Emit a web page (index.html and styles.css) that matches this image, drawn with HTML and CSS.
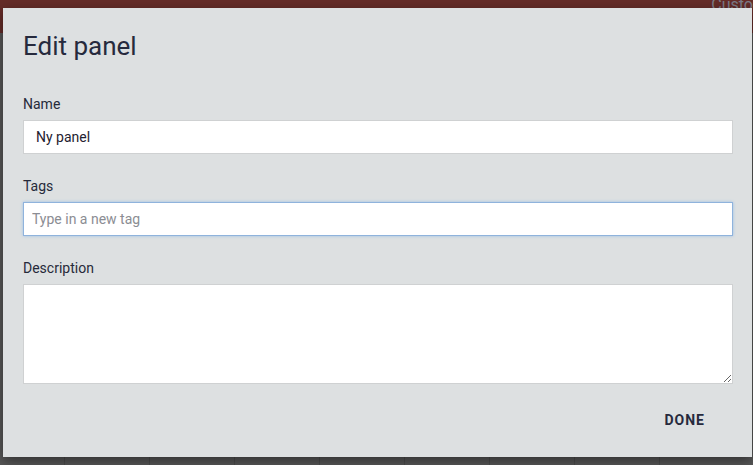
FILE: index.html
```html
<!DOCTYPE html>
<html lang="en">
<head>
  <meta charset="UTF-8">
  <title>Edit panel</title>
  <link rel="stylesheet" href="styles.css">
</head>
<body>

  <!-- Bakgrunn -->
  <div class="topbar"><span class="topbar-text">Custo</span></div>
  <div class="grid">
    <div></div><div></div><div></div><div></div><div></div><div></div><div></div><div></div>
  </div>

  <!-- Dialog -->
  <div class="dialog">
    <h1>Edit panel</h1>

    <label class="field-label">Name</label>
    <input class="field name-field" type="text" value="Ny panel">

    <label class="field-label">Tags</label>
    <input class="field tag-field" type="text" placeholder="Type in a new tag">

    <label class="field-label">Description</label>
    <textarea class="field desc-field"></textarea>

    <div class="actions">
      <button class="done">Done</button>
    </div>
  </div>

</body>
</html>
```
FILE: styles.css
```css
body {
  margin: 0;
  padding: 0;
  width: 753px;
  height: 465px;
  overflow: hidden;
  position: relative;
  background: #585858;
  font-family: Roboto, 'Noto Sans', sans-serif;
}

/* Bakgrunn */
.topbar {
  height: 33px;
  background: #652c28;
  position: relative;
}

.topbar-text {
  position: absolute;
  right: 0;
  top: -5px;
  color: #7d7d88;
  font-size: 16px;
}

.grid {
  position: absolute;
  left: 0;
  right: 0;
  bottom: 0;
  height: 20px;
  display: flex;
  padding-left: 64px;
  overflow: hidden;
}

.grid div {
  flex: 0 0 84px;
  border-left: 1px solid #4c4c4c;
}

/* Dialog */
.dialog {
  position: absolute;
  left: 3px;
  top: 8px;
  width: 749px;
  height: 449px;
  box-sizing: border-box;
  background: #dde0e1;
  padding: 22px 19px 0 20px;
  box-shadow: 0 4px 12px rgba(0, 0, 0, 0.45);
}

h1 {
  margin: 0 0 34px;
  font-size: 26px;
  font-weight: 400;
  color: #262a3d;
  line-height: 32px;
}

.field-label {
  display: block;
  font-size: 14px;
  color: #262a3a;
  line-height: 17px;
  margin-bottom: 7px;
}

.field {
  display: block;
  width: 100%;
  box-sizing: border-box;
  background: #fff;
  border: 1px solid #cfd1d2;
  font-family: Roboto, 'Noto Sans', sans-serif;
  font-size: 14px;
  color: #1f2230;
  outline: none;
  margin: 0 0 24px;
}

.name-field {
  height: 34px;
  padding: 0 12px;
}

.tag-field {
  height: 34px;
  padding: 0 8px;
  border-color: #8fb3dc;
  box-shadow: 0 0 3px #9cc0e8;
}

.tag-field::placeholder { color: #8b8d93; }

.desc-field {
  height: 100px;
  resize: vertical;
  margin-bottom: 0;
}

.actions {
  display: flex;
  justify-content: flex-end;
  padding-top: 20px;
}

.done {
  background: none;
  border: none;
  font-family: Roboto, 'Noto Sans', sans-serif;
  font-size: 14px;
  font-weight: 700;
  letter-spacing: 1px;
  text-transform: uppercase;
  color: #262a3d;
  padding: 8px 28px 8px 8px;
  cursor: pointer;
}
```
